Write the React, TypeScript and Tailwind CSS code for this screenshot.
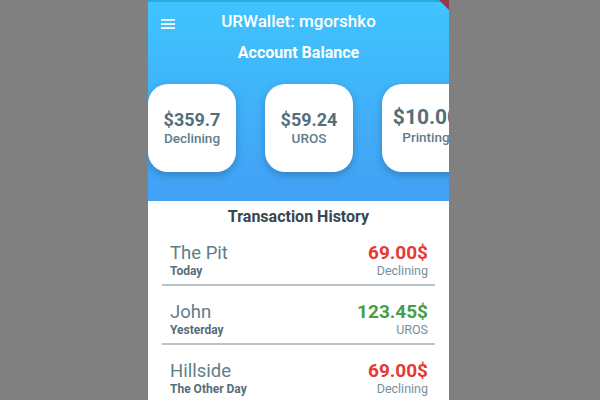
import React from 'react';

type Balance = { amount: string; label: string; big?: boolean };
type Tx = { name: string; when: string; amount: string; account: string; debit: boolean };

const balances: Balance[] = [
  { amount: '$359.7', label: 'Declining' },
  { amount: '$59.24', label: 'UROS' },
  { amount: '$10.00', label: 'Printing', big: true },
];

const transactions: Tx[] = [
  { name: 'The Pit', when: 'Today', amount: '69.00$', account: 'Declining', debit: true },
  { name: 'John', when: 'Yesterday', amount: '123.45$', account: 'UROS', debit: false },
  { name: 'Hillside', when: 'The Other Day', amount: '69.00$', account: 'Declining', debit: true },
];

const MenuIcon = () => (
  <svg width="14" height="10" viewBox="0 0 14 10" fill="white">
    <rect x="0" y="0" width="14" height="1.8" />
    <rect x="0" y="4.1" width="14" height="1.8" />
    <rect x="0" y="8.2" width="14" height="1.8" />
  </svg>
);

export default function App() {
  return (
    <div
      className="w-[600px] h-[400px] bg-[#808080] flex pl-[148px] overflow-hidden"
      style={{ fontFamily: 'Roboto, "Noto Sans", sans-serif' }}
    >
      <div className="relative w-[301px] h-[400px] flex flex-col bg-white overflow-hidden">
        {/* debug corner */}
        <svg className="absolute top-0 right-0" width="10" height="10" viewBox="0 0 10 10">
          <polygon points="0,0 10,0 10,10" fill="#8e3a4a" />
        </svg>

        <div className="shrink-0 h-[201px] bg-gradient-to-b from-[#3fc4fe] to-[#42a0f5] flex flex-col">
          <div className="h-[2px] bg-[#2fa9dc]" />
          <div className="relative h-[40px] flex items-center justify-center">
            <div className="absolute left-[13px] top-[17px]">
              <MenuIcon />
            </div>
            <span className="text-white text-[17px] font-medium">URWallet: mgorshko</span>
          </div>
          <div className="text-center text-white text-[16px] font-bold mt-[-1px]">Account Balance</div>

          <div className="flex gap-[29px] mt-[19px]">
            {balances.map((b) => (
              <div
                key={b.label}
                className="shrink-0 w-[88px] h-[88px] bg-white rounded-[20px] shadow-[0_3px_8px_rgba(0,0,0,0.22)] flex flex-col items-center justify-center"
              >
                <span
                  className={`font-bold text-[#546e7a] leading-none whitespace-nowrap ${b.big ? 'text-[21px] mt-[-4px]' : 'text-[18px]'}`}
                >
                  {b.amount}
                </span>
                <span className="text-[13.5px] font-medium text-[#607d8b] mt-[3px] leading-none">{b.label}</span>
              </div>
            ))}
          </div>
        </div>

        <div className="shrink-0 flex flex-col px-[14px]">
          <div className="text-center text-[#37474f] text-[16px] font-bold mt-[6px] leading-[20px]">Transaction History</div>
          <div>
            {transactions.map((t, i) => (
              <div key={i}>
                <div className="flex justify-between pl-[8px] pr-[7px] pt-[15px] pb-[6px]">
                  <div className="flex flex-col">
                    <span className="text-[18.5px] text-[#607d8b] leading-[22px]">{t.name}</span>
                    <span className="text-[12px] font-bold text-[#546e7a] leading-[14px]">{t.when}</span>
                  </div>
                  <div className="flex flex-col items-end">
                    <span
                      className={`text-[19px] font-bold leading-[22px] ${t.debit ? 'text-[#e53935]' : 'text-[#43a047]'}`}
                    >
                      {t.amount}
                    </span>
                    <span className="text-[12.5px] text-[#78909c] leading-[14px]">{t.account}</span>
                  </div>
                </div>
                {i < transactions.length - 1 && <div className="h-[2px] bg-[#b8c3ca]" />}
              </div>
            ))}
          </div>
        </div>
      </div>
    </div>
  );
}
